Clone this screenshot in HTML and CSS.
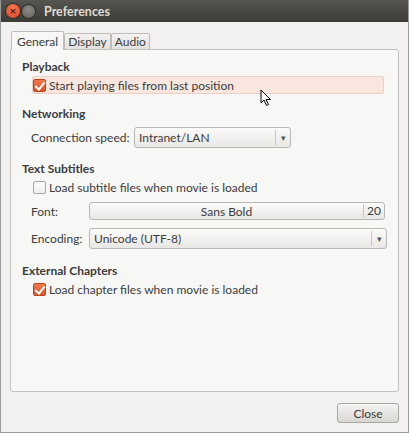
FILE: index.html
```html
<!DOCTYPE html>
<html lang="en">

<head>
    <meta charset="UTF-8">
    <title>Preferences</title>
    <link rel="stylesheet" href="styles.css">
</head>

<body>
    <div class="window">
        <div class="titlebar">
            <span class="btn-close">×</span>
            <span class="btn-min"></span>
            <span class="title">Preferences</span>
        </div>
        <div class="content">
            <div class="tabs">
                <div class="tab active">General</div>
                <div class="tab">Display</div>
                <div class="tab">Audio</div>
            </div>
            <div class="panel">
                <h3>Playback</h3>
                <label class="check-row hover">
                    <span class="box checked"></span>
                    Start playing files from last position
                </label>

                <h3>Networking</h3>
                <div class="field-row">
                    <span class="field-label">Connection speed:</span>
                    <div class="combo small">
                        <span class="combo-text">Intranet/LAN</span>
                        <span class="combo-arrow">▾</span>
                    </div>
                </div>

                <h3>Text Subtitles</h3>
                <label class="check-row">
                    <span class="box"></span>
                    Load subtitle files when movie is loaded
                </label>
                <div class="grid-rows">
                    <span class="field-label">Font:</span>
                    <div class="font-btn">
                        <span class="font-name">Sans Bold</span>
                        <span class="font-size">20</span>
                    </div>
                    <span class="field-label">Encoding:</span>
                    <div class="combo">
                        <span class="combo-text">Unicode (UTF-8)</span>
                        <span class="combo-arrow">▾</span>
                    </div>
                </div>

                <h3>External Chapters</h3>
                <label class="check-row">
                    <span class="box checked"></span>
                    Load chapter files when movie is loaded
                </label>
            </div>
            <div class="actions">
                <button class="close-btn">Close</button>
            </div>
        </div>
        <!-- mouse pointer over the hovered row -->
        <svg class="cursor" width="12" height="18" viewBox="0 0 12 18">
            <path d="M1 1 L1 14 L4 11 L6.5 16.5 L8.5 15.5 L6 10.5 L10.5 10.5 Z" fill="#fff" stroke="#000" stroke-width="1"/>
        </svg>
    </div>
</body>

</html>
```

FILE: styles.css
```css
body {
    margin: 0;
    font-family: Lato, "Noto Sans", sans-serif;
    font-size: 12px;
    color: #3c3c3c;
}

.window {
    position: relative;
    width: 409px;
    height: 433px;
    box-sizing: border-box;
    background-color: #f2f1f0;
    border: 1px solid #9a9a98;
    border-top: none;
    display: flex;
    flex-direction: column;
    overflow: hidden;
}

.titlebar {
    height: 22px;
    flex: none;
    background: linear-gradient(to bottom, #57554f, #3c3b37);
    display: flex;
    align-items: center;
    padding-left: 6px;
    margin: 0 -1px;
}

.btn-close {
    width: 14px;
    height: 14px;
    border-radius: 50%;
    background: radial-gradient(circle at 50% 35%, #f57a5a, #d9451e);
    box-shadow: 0 0 0 1px #2f2e2a;
    color: #5a1a0a;
    font-size: 12px;
    line-height: 13px;
    text-align: center;
    font-weight: bold;
}

.btn-min {
    width: 13px;
    height: 13px;
    border-radius: 50%;
    margin-left: 2px;
    background: radial-gradient(circle at 50% 35%, #8e8c86, #5e5c57);
    box-shadow: 0 0 0 1px #2f2e2a;
}

.title {
    margin-left: 9px;
    color: #dfdbd2;
    font-weight: bold;
    font-size: 12.5px;
}

.content {
    flex: 1;
    display: flex;
    flex-direction: column;
    padding: 9px 9px 9px 9px;
}

.tabs {
    display: flex;
    padding-left: 1px;
    height: 18px;
    align-items: flex-end;
}

.tab {
    height: 15px;
    padding: 0 3px;
    border: 1px solid #bfbdb9;
    border-bottom: none;
    background: linear-gradient(to bottom, #f3f2f1, #e3e1de);
    line-height: 15px;
    color: #3c3c3c;
    border-radius: 2px 2px 0 0;
}

.tab.active {
    height: 18px;
    line-height: 19px;
    padding: 0 5px;
    background-color: #f7f7f6;
    background-image: none;
    position: relative;
    top: 1px;
    z-index: 1;
}

.panel {
    height: 343px;
    box-sizing: border-box;
    background-color: #f7f7f6;
    border: 1px solid #c4c2be;
    border-radius: 0 3px 3px 3px;
    padding: 8px 11px 0 11px;
}

h3 {
    margin: 0;
    font-size: 12px;
    font-weight: bold;
    height: 17px;
    line-height: 17px;
    color: #3c3c3c;
}

.check-row {
    display: flex;
    align-items: center;
    height: 18px;
    margin-left: 10px;
    margin-top: 1px;
    margin-bottom: 11px;
    gap: 3px;
    box-sizing: border-box;
    border: 1px solid transparent;
    border-radius: 2px;
}

.check-row.hover {
    background-color: #f8e6df;
    border-color: #efcfc4;
    margin-right: 3px;
}

.box {
    width: 11px;
    height: 11px;
    border: 1px solid #a9a7a2;
    border-radius: 2px;
    background: linear-gradient(to bottom, #ffffff, #eeedeb);
    position: relative;
    flex: none;
}

.box.checked {
    background: linear-gradient(to bottom, #ef7a4f, #db5626);
    border-color: #b8461f;
}

.box.checked::after {
    content: "";
    position: absolute;
    left: 3px;
    top: 0px;
    width: 4px;
    height: 8px;
    border: solid #fff;
    border-width: 0 2px 2px 0;
    transform: rotate(40deg);
}

.field-row {
    display: flex;
    align-items: center;
    margin-left: 9px;
    margin-top: 5px;
    margin-bottom: 12px;
    gap: 10px;
}

.field-label {
    color: #3c3c3c;
    white-space: nowrap;
}

.field-row .field-label {
    width: 93px;
    flex: none;
}

.combo {
    height: 21px;
    box-sizing: border-box;
    border: 1px solid #b9b7b2;
    border-radius: 3px;
    background: linear-gradient(to bottom, #fbfbfa, #e8e7e5);
    display: flex;
    align-items: center;
    padding-left: 4px;
}

.combo.small {
    width: 157px;
}

.combo-text {
    flex: 1;
}

.combo-arrow {
    width: 14px;
    border-left: 1px solid #c9c7c3;
    text-align: center;
    font-size: 9px;
    color: #555;
    height: 15px;
    line-height: 15px;
}

.grid-rows {
    display: grid;
    grid-template-columns: 58px 1fr;
    row-gap: 8px;
    margin-left: 9px;
    margin-top: -5px;
    margin-bottom: 13px;
    align-items: center;
}

.font-btn {
    height: 18px;
    box-sizing: border-box;
    border: 1px solid #b9b7b2;
    border-radius: 3px;
    background: linear-gradient(to bottom, #fbfbfa, #e8e7e5);
    display: flex;
    align-items: center;
    margin-right: 2px;
}

.font-name {
    flex: 1;
    text-align: center;
}

.font-size {
    width: 20px;
    border-left: 1px solid #c9c7c3;
    text-align: center;
    line-height: 14px;
}

.actions {
    display: flex;
    justify-content: flex-end;
    padding-top: 11px;
}

.close-btn {
    width: 62px;
    height: 20px;
    font-family: inherit;
    font-size: 12px;
    color: #3c3c3c;
    border: 1px solid #a9a7a2;
    border-radius: 3px;
    background: linear-gradient(to bottom, #f4f3f2, #d9d7d3);
    padding: 0;
}

.cursor {
    position: absolute;
    left: 259px;
    top: 89px;
}
```
